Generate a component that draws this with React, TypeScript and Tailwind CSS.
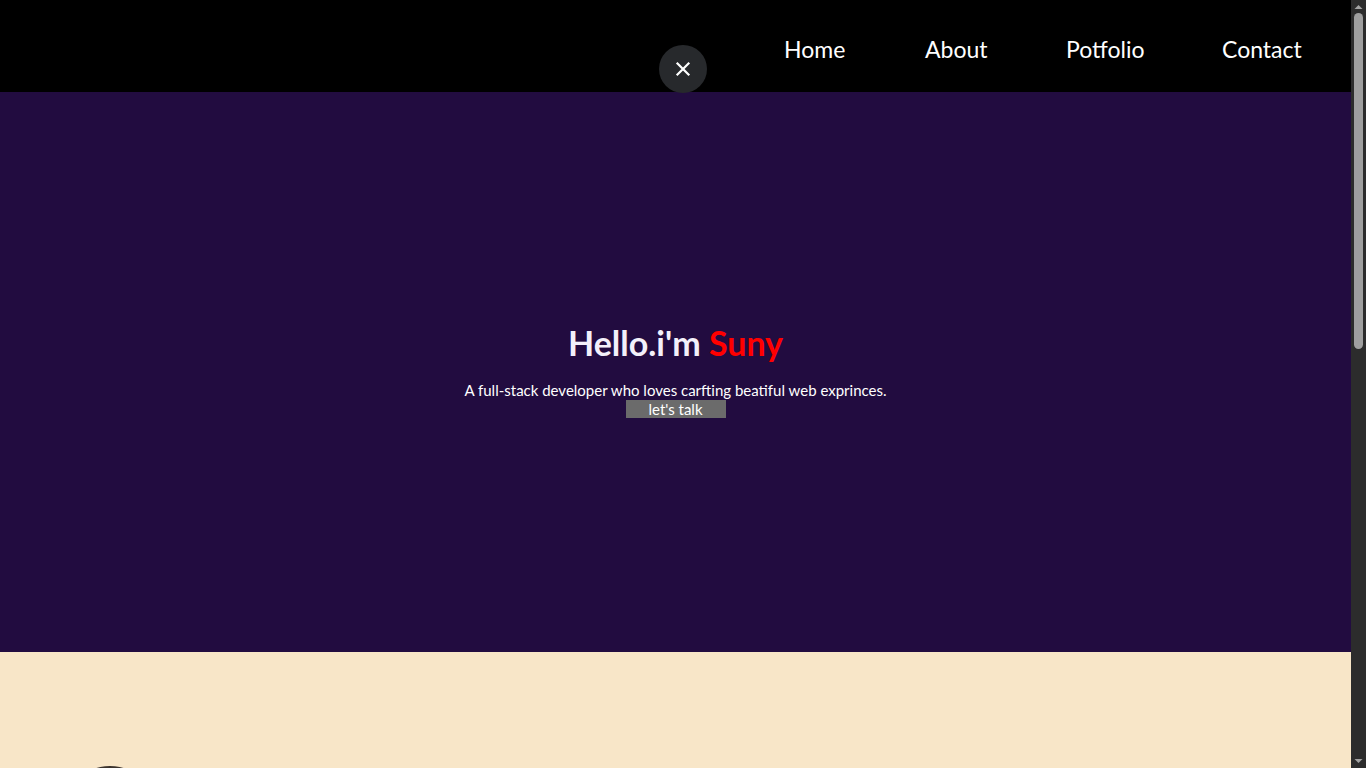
import React from "react";

function FakeScrollbar() {
  return (
    <aside className="sticky top-0 h-screen w-[15px] shrink-0 bg-[#2c2c2c] flex flex-col items-center">
      <svg width="15" height="14" viewBox="0 0 15 14" className="shrink-0">
        <path d="M3.5 9 L7.5 5 L11.5 9 Z" fill="#a3a3a3" />
      </svg>
      <div className="w-[9px] h-[336px] rounded-[5px] bg-[#9f9f9f] mt-[-1px]" />
      <div className="flex-1" />
      <svg width="15" height="14" viewBox="0 0 15 14" className="shrink-0">
        <path d="M3.5 5 L7.5 9 L11.5 5 Z" fill="#a3a3a3" />
      </svg>
    </aside>
  );
}

export default function App() {
  const font = { fontFamily: '"Gill Sans", "Gill Sans MT", Lato, "Noto Sans", sans-serif' };
  return (
    <div className="flex items-start bg-black" style={font}>
      <main className="flex-1 min-w-0">
        <nav className="relative h-[92px] bg-black flex items-start justify-end pr-[51px] pt-[35px]">
          <button className="absolute left-[659px] top-[45px] z-10 w-12 h-12 rounded-full bg-[#27292c] flex items-center justify-center">
            <svg width="16" height="16" viewBox="0 0 16 16" fill="none" stroke="white" strokeWidth="2.2" strokeLinecap="square">
              <path d="M2.5 2.5 L13.5 13.5 M13.5 2.5 L2.5 13.5" />
            </svg>
          </button>
          <ul className="flex gap-[81px] text-white text-[23px] leading-[28px]">
            <li className="w-[60px] text-center whitespace-nowrap">Home</li>
            <li className="w-[60px] text-center whitespace-nowrap">About</li>
            <li className="w-[75px] text-center whitespace-nowrap">Potfolio</li>
            <li className="w-[78px] text-center whitespace-nowrap">Contact</li>
          </ul>
        </nav>
        <section className="h-[560px] bg-[#220c40] flex flex-col items-center justify-center text-center pb-[4px]">
          <h1 className="text-[34px] leading-[40px] font-bold text-[#f3f0fa] mb-[18px]">
            Hello.i'm <span className="text-[#ff0000]">Suny</span>
          </h1>
          <p className="text-[15px] leading-[18px] text-white">
            A full-stack developer who loves carfting beatiful web exprinces.
          </p>
          <button className="w-[100px] h-[18px] bg-[#6b6b6b] text-white text-[15px] leading-[18px] mt-[1px]">
            let's talk
          </button>
        </section>
        <section className="h-[1018px] bg-[#f8e6c8] pt-[114px] pl-[60px]">
          <div className="w-[100px] h-[100px] rounded-full bg-gradient-to-b from-[#3b332e] to-[#6b5a4e]" />
        </section>
      </main>
      <FakeScrollbar />
    </div>
  );
}
